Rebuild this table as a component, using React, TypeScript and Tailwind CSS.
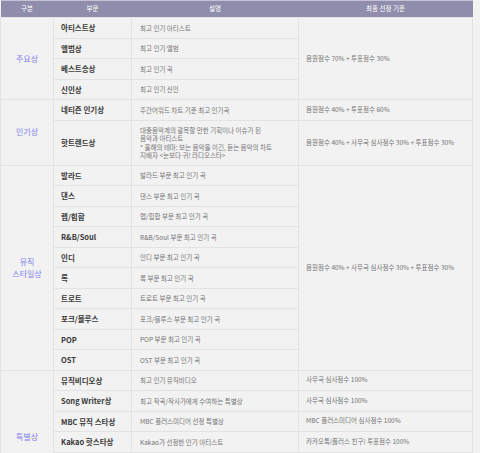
import React from "react";

type Award = {
  name: string;
  desc: React.ReactNode;
  tall?: number;
};

type Group = {
  label: React.ReactNode;
  awards: Award[];
  criteria: { text: string; span: number }[];
};

const groups: Group[] = [
  {
    label: "주요상",
    awards: [
      { name: "아티스트상", desc: "최고 인기 아티스트" },
      { name: "앨범상", desc: "최고 인기 앨범" },
      { name: "베스트송상", desc: "최고 인기 곡" },
      { name: "신인상", desc: "최고 인기 신인" },
    ],
    criteria: [{ text: "음원점수 70% + 투표점수 30%", span: 4 }],
  },
  {
    label: "인기상",
    awards: [
      { name: "네티즌 인기상", desc: "주간어워드 차트 기준 최고 인기곡" },
      {
        name: "핫트렌드상",
        tall: 45,
        desc: (
          <>
            <span className="block">대중음악계의 괄목할 만한 기획이나 이슈가 된</span>
            <span className="block">음악과 아티스트</span>
            <span className="block">* 올해의 테마: 보는 음악을 이긴, 듣는 음악의 차트</span>
            <span className="block">지배자 &lt;눈보다 귀! 라디오스타&gt;</span>
          </>
        ),
      },
    ],
    criteria: [
      { text: "음원점수 40% + 투표점수 60%", span: 1 },
      { text: "음원점수 40% + 사무국 심사점수 30% + 투표점수 30%", span: 1 },
    ],
  },
  {
    label: (
      <>
        뮤직
        <br />
        스타일상
      </>
    ),
    awards: [
      "발라드",
      "댄스",
      "랩/힙합",
      "R&B/Soul",
      "인디",
      "록",
      "트로트",
      "포크/블루스",
      "POP",
      "OST",
    ].map((g) => ({ name: g, desc: `${g} 부문 최고 인기 곡` })),
    criteria: [{ text: "음원점수 40% + 사무국 심사점수 30% + 투표점수 30%", span: 10 }],
  },
  {
    label: "특별상",
    awards: [
      { name: "뮤직비디오상", desc: "최고 인기 뮤직비디오" },
      { name: "Song Writer상", desc: "최고 작곡/작사가에게 수여하는 특별상" },
      { name: "MBC 뮤직 스타상", desc: "MBC 플러스미디어 선정 특별상" },
      { name: "Kakao 핫스타상", desc: "Kakao가 선정한 인기 아티스트" },
      // rest of the table runs below the fold
      { name: "", desc: "", tall: 52 },
    ],
    criteria: [
      { text: "사무국 심사점수 100%", span: 1 },
      { text: "사무국 심사점수 100%", span: 1 },
      { text: "MBC 플러스미디어 심사점수 100%", span: 1 },
      { text: "카카오톡(플러스 친구) 투표점수 100%", span: 1 },
      { text: "", span: 1 },
    ],
  },
];

const cell = "border border-[#e3e3e3] align-middle";

export default function App() {
  return (
    <div
      className="h-[453px] bg-[#f2f2f2] overflow-hidden"
      style={{ fontFamily: '"Noto Sans CJK KR", "Noto Sans", sans-serif' }}
    >
      <table className="w-[472px] table-fixed border-collapse bg-[#f2f2f2]">
        <colgroup>
          <col className="w-[53px]" />
          <col className="w-[78px]" />
          <col className="w-[167px]" />
          <col className="w-[174px]" />
        </colgroup>
        <thead>
          <tr className="h-[17px] bg-[#908dac] border-t border-[#c4c2d4] text-white text-[6.5px]">
            <th className="font-normal">구분</th>
            <th className="font-normal">부문</th>
            <th className="font-normal">설명</th>
            <th className="font-normal">최종 선정 기준</th>
          </tr>
        </thead>
        <tbody>
          {groups.map((group, gi) => {
            let ci = 0;
            let used = 0;
            return group.awards.map((award, ai) => {
              let crit: { text: string; span: number } | null = null;
              if (ai === used && ci < group.criteria.length) {
                crit = group.criteria[ci];
                used += crit.span;
                ci++;
              }
              return (
                <tr key={`${gi}-${ai}`} style={{ height: award.tall ?? 20.5 }}>
                  {ai === 0 && (
                    <td
                      rowSpan={group.awards.length}
                      className={`${cell} text-center text-[8px] leading-[12px] text-[#7f7ff0]`}
                    >
                      {group.label}
                    </td>
                  )}
                  <td className={`${cell} pl-[7px] text-[7.5px] font-bold text-[#3a3a3a] whitespace-nowrap`}>
                    {award.name}
                  </td>
                  <td className={`${cell} pl-[8px] pr-1 text-[6.5px] leading-[8.5px] text-[#737373] whitespace-nowrap`}>
                    {award.desc}
                  </td>
                  {crit && (
                    <td
                      rowSpan={crit.span}
                      className={`${cell} pl-[7px] text-[6.5px] text-[#737373] whitespace-nowrap`}
                    >
                      {crit.text}
                    </td>
                  )}
                </tr>
              );
            });
          })}
        </tbody>
      </table>
    </div>
  );
}
